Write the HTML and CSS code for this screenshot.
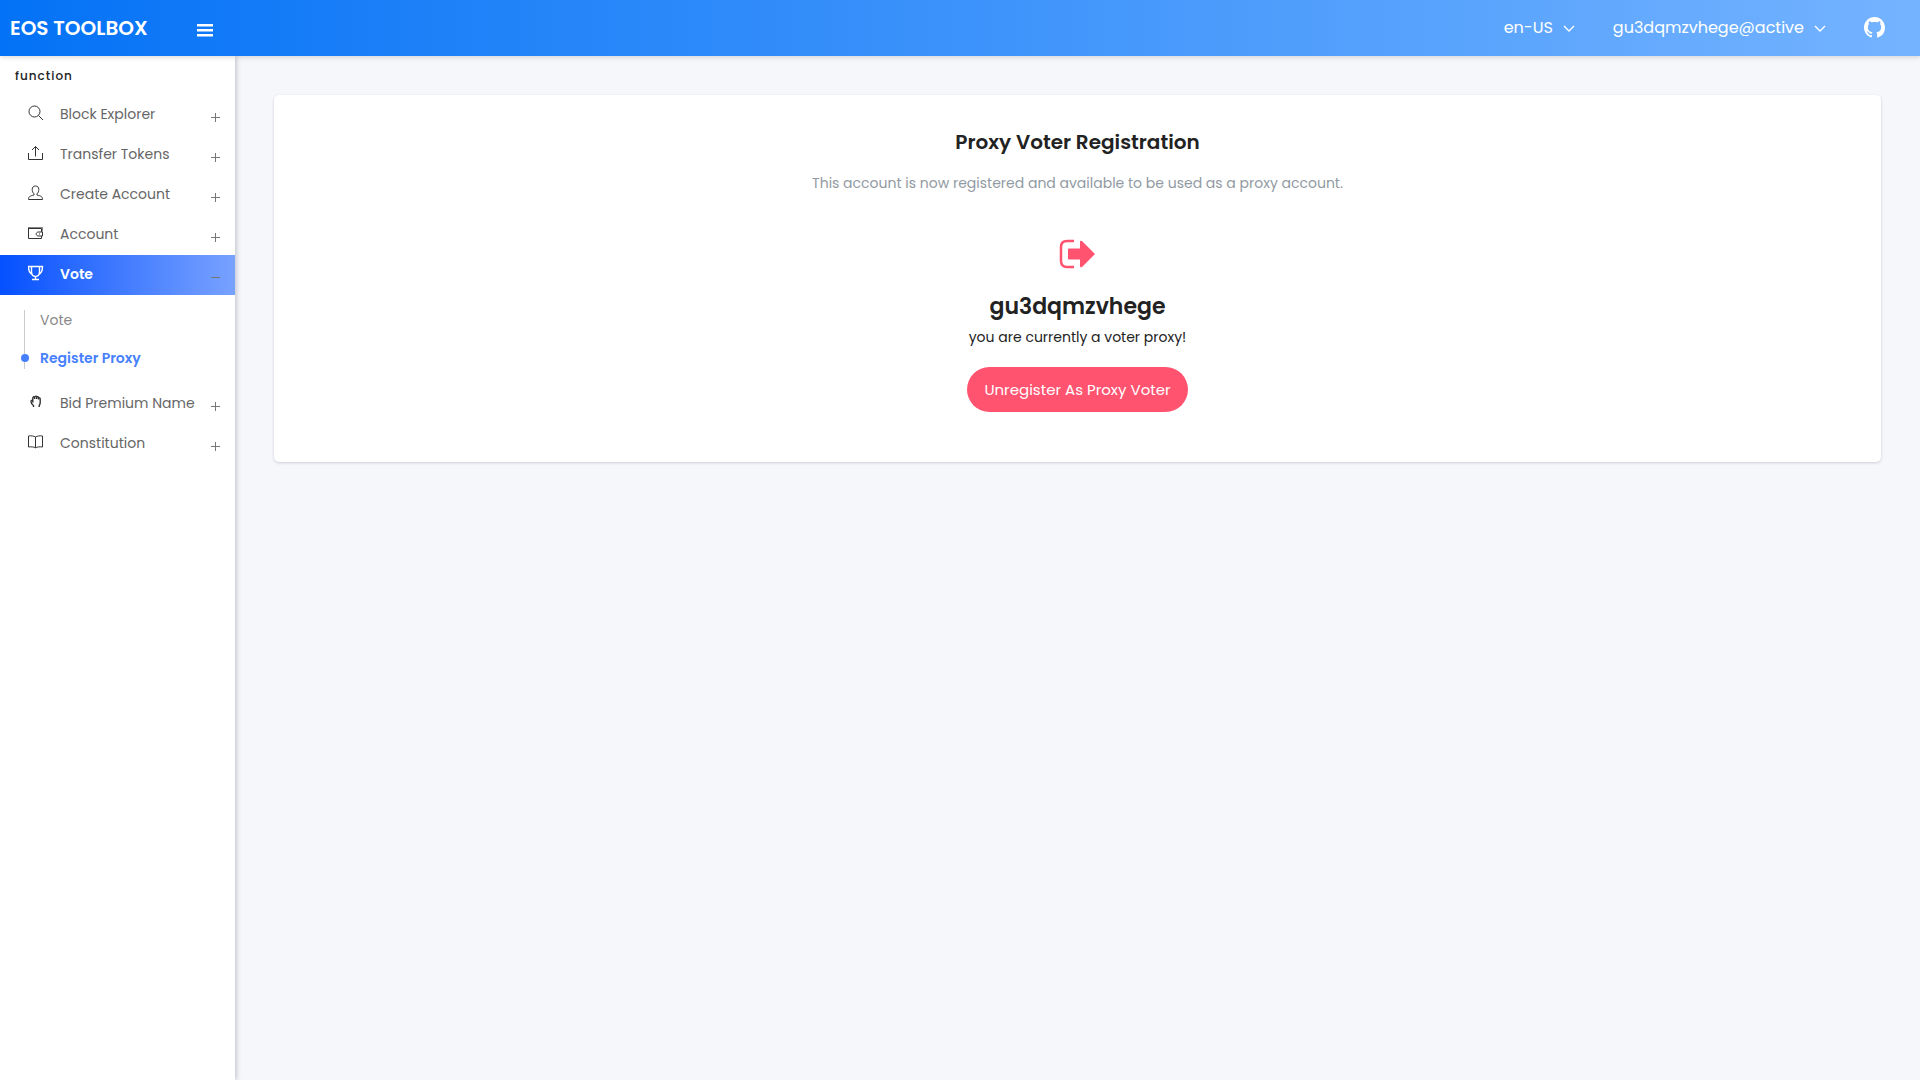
FILE: index.html
```html
<!DOCTYPE html>
<html lang="en">
<head>
<meta charset="utf-8">
<meta name="viewport" content="width=device-width, initial-scale=1">
<title>EOS Toolbox</title>
<link rel="stylesheet" href="styles.css">
</head>
<body>
<header class="topbar">
  <div class="topbar-start">
    <a class="brand" href="#">EOS TOOLBOX</a>
    <button class="menu-toggle" type="button" aria-label="Toggle menu">
      <svg width="16" height="14" viewBox="0 0 16 14" fill="currentColor"><path d="M0 1h16v2.500H0zM0 6h16v2.500H0zM0 11h16v2.500H0z"/></svg>
    </button>
  </div>
  <nav class="topbar-end" aria-label="Account">
    <button class="dropdown" type="button">en-US
      <svg width="12" height="12" viewBox="0 0 12 12"><path class="line bold" d="M1 4l5 5 5-5"/></svg>
    </button>
    <button class="dropdown" type="button">gu3dqmzvhege@active
      <svg width="12" height="12" viewBox="0 0 12 12"><path class="line bold" d="M1 4l5 5 5-5"/></svg>
    </button>
    <a class="github" href="#" aria-label="GitHub">
      <svg width="21" height="21" viewBox="0 0 16 16" fill="currentColor"><path d="M8 0C3.58 0 0 3.58 0 8c0 3.54 2.29 6.53 5.47 7.59.4.07.55-.17.55-.38 0-.19-.01-.82-.01-1.49-2.01.37-2.53-.49-2.69-.94-.09-.23-.48-.94-.82-1.13-.28-.15-.68-.52-.01-.53.63-.01 1.08.58 1.23.82.72 1.21 1.87.87 2.33.66.07-.52.28-.87.51-1.07-1.78-.2-3.64-.89-3.64-3.95 0-.87.31-1.59.82-2.15-.08-.2-.36-1.02.08-2.12 0 0 .67-.21 2.2.82.64-.18 1.32-.27 2-.27s1.36.09 2 .27c1.53-1.04 2.2-.82 2.2-.82.44 1.1.16 1.92.08 2.12.51.56.82 1.27.82 2.15 0 3.07-1.87 3.75-3.65 3.95.29.25.54.73.54 1.48 0 1.07-.01 1.93-.01 2.2 0 .21.15.46.55.38A8.01 8.01 0 0 0 16 8c0-4.42-3.58-8-8-8z"/></svg>
    </a>
  </nav>
</header>
<div class="layout">
  <aside class="sidebar">
    <h2 class="section-label">function</h2>
    <ul class="menu">
      <li><a class="item" href="#">
        <svg class="icon" viewBox="0 0 16 16"><circle class="line" cx="6.5" cy="6.5" r="5.5"/><path class="line" d="M10.5 10.500l4.500 4.500"/></svg>
        <span class="label">Block Explorer</span>
        <svg class="mark" viewBox="0 0 9 9"><path d="M4.500 0v9M0 4.500h9"/></svg></a></li>
      <li><a class="item" href="#">
        <svg class="icon" viewBox="0 0 16 16"><path class="line" d="M.5 8v6.500h14V8M7.500 11.500V1.500M4 5l3.500-3.500L11 5"/></svg>
        <span class="label">Transfer Tokens</span>
        <svg class="mark" viewBox="0 0 9 9"><path d="M4.500 0v9M0 4.500h9"/></svg></a></li>
      <li><a class="item" href="#">
        <svg class="icon" viewBox="0 0 16 16"><path class="line" d="M.5 14.500c0-3 1.500-3.500 5.500-4.500V8.800C4.700 7.800 4.200 6 4.200 4.500 4.200 2.200 5.500 1 7.500 1s3.300 1.200 3.300 3.500c0 1.500-.5 3.300-1.800 4.300V10c4 1 5.500 1.500 5.500 4.500z"/></svg>
        <span class="label">Create Account</span>
        <svg class="mark" viewBox="0 0 9 9"><path d="M4.500 0v9M0 4.500h9"/></svg></a></li>
      <li><a class="item" href="#">
        <svg class="icon" viewBox="0 0 16 16"><path class="line" d="M13.500 7V3.500M13.500 11v2.500H.5v-11M14.500 7v4h-4.500c-1.200-.4-1.800-1.100-1.800-2s.6-1.600 1.800-2zM11 9h1"/><path class="line" opacity=".6" d="M.5 2.500h14v4"/><path class="line" d="M.5 3.500h13"/></svg>
        <span class="label">Account</span>
        <svg class="mark" viewBox="0 0 9 9"><path d="M4.500 0v9M0 4.500h9"/></svg></a></li>
      <li>
        <a class="item active" href="#" aria-expanded="true">
        <svg class="icon" viewBox="0 0 16 16"><path class="line bold" d="M3.500 1.500h8v5c0 3-1.500 5-4 5s-4-2-4-5zM3.500 1.500h-3c0 4 1 7 4 8M11.500 1.500h3c0 4-1 7-4 8M7.500 11.500v3M4 14.500h7"/></svg>
        <span class="label">Vote</span>
        <svg class="mark" viewBox="0 0 9 9"><path d="M0 4.500h9"/></svg></a>
        <ul class="submenu">
          <li><a class="subitem" href="#">Vote</a></li>
          <li><a class="subitem current" href="#" aria-current="page">Register Proxy</a></li>
        </ul>
      </li>
      <li><a class="item" href="#">
        <svg class="icon" viewBox="0 0 16 16"><path class="line bold" d="M5.500 13v-1.500C4 10.500 3 9 3 7.500c0-1.200 1-1.500 1.800-.5V4c0-1.300 1.200-1.600 1.700-.8C7 1.800 8.500 1.800 8.800 3c.6-.8 1.700-.3 1.700.8.8-.5 1.700 0 1.700 1v4c0 1.200-.5 1.900-1 2.700V13M4.800 6v2.500M6.600 3v2M8.600 3v2M10.500 3.500v2"/></svg>
        <span class="label">Bid Premium Name</span>
        <svg class="mark" viewBox="0 0 9 9"><path d="M4.500 0v9M0 4.500h9"/></svg></a></li>
      <li><a class="item" href="#">
        <svg class="icon" viewBox="0 0 16 16"><path class="line" d="M7.500 3C6 2 3 1.500.500 2v11c2.500-.3 5.500-.2 7 .8 1.500-1 4.500-1.100 7-.8V2C12 1.500 9 2 7.500 3zv10.800"/></svg>
        <span class="label">Constitution</span>
        <svg class="mark" viewBox="0 0 9 9"><path d="M4.500 0v9M0 4.500h9"/></svg></a></li>
    </ul>
  </aside>
  <main class="content">
    <section class="card">
      <h1 class="card-title">Proxy Voter Registration</h1>
      <p class="card-subtitle">This account is now registered and available to be used as a proxy account.</p>
      <svg class="status-icon" width="38" height="30" viewBox="0 0 38 30"><path d="M15 2H8Q2 2 2 8v14q0 6 6 6h7" fill="none" stroke="currentColor" stroke-width="2.500"/><path fill="currentColor" d="M10 9.500h11V3q0-2 2-1l13 13-13 13q-2 1-2-1v-6.500H10q-1 0-1-1v-9q0-1 1-1z"/></svg>
      <h2 class="account">gu3dqmzvhege</h2>
      <p class="status">you are currently a voter proxy!</p>
      <button class="unregister" type="button">Unregister As Proxy Voter</button>
    </section>
  </main>
</div>
</body>
</html>
```
FILE: styles.css
```css
* { box-sizing: border-box; }
body {
  margin: 0;
  min-height: 100vh;
  display: flex;
  flex-direction: column;
  background: #f6f7fb;
  color: #222;
  font-family: Poppins, Inter, "Open Sans", sans-serif;
  font-size: 14px;
  line-height: 20px;
}
h1, h2, p, ul { margin: 0; padding: 0; }
ul { list-style: none; }
a { color: inherit; text-decoration: none; }
button { font: inherit; color: inherit; border: 0; background: none; padding: 0; cursor: pointer; }
svg { display: block; flex: none; }
.line { fill: none; stroke: currentColor; }
.bold { stroke-width: 1.4; }

.topbar {
  position: relative;
  z-index: 2;
  height: 56px;
  display: flex;
  align-items: center;
  justify-content: space-between;
  color: #fff;
  background: linear-gradient(to right, #0472f6, #74b3ff);
  box-shadow: 0 1px 5px rgba(43, 43, 43, .2);
}
.topbar-start {
  width: 235px;
  padding: 0 22px 0 10px;
  display: flex;
  align-items: center;
  justify-content: space-between;
}
.brand { font-size: 20px; font-weight: 600; }
.menu-toggle { padding-top: 4px; }
.topbar-end { display: flex; align-items: center; gap: 38px; padding-right: 35px; }
.dropdown { display: flex; align-items: center; gap: 10px; font-size: 16px; }
.github { padding-bottom: 2px; }

.layout { flex: 1; display: flex; }
.sidebar {
  width: 235px;
  flex: none;
  background: #fff;
  box-shadow: 1px 0 5px rgba(43, 54, 80, .3);
}
.section-label {
  padding: 10px 15px 9px;
  font-size: 12px;
  font-weight: 500;
  letter-spacing: 1px;
}
.item {
  height: 40px;
  display: flex;
  align-items: center;
  padding: 0 15px 2px 28px;
  color: #666;
}
.icon { width: 16px; height: 16px; margin: 0 16px 2px 0; color: #333; }
.label { flex: 1; }
.mark { width: 9px; height: 9px; margin-top: 7px; fill: none; stroke: #777; }
.active {
  color: #fff;
  font-weight: 600;
  background: linear-gradient(to right, #0550ff, #78a2ff);
}
.active .icon { color: #fff; }
.submenu { position: relative; padding: 6px 0 7px; }
.submenu::before {
  content: "";
  position: absolute;
  left: 24px;
  top: 15px;
  bottom: 15px;
  width: 1px;
  background: #ccc;
}
.subitem {
  position: relative;
  display: flex;
  align-items: center;
  height: 38px;
  padding-left: 40px;
  color: #888;
}
.current { color: #4680ff; font-weight: 600; }
.current::before {
  content: "";
  position: absolute;
  left: 21px;
  width: 8px;
  height: 8px;
  border-radius: 50%;
  background: currentColor;
}

.content { flex: 1; padding: 39px; }
.card {
  display: flex;
  flex-direction: column;
  align-items: center;
  padding: 32px 20px 50px;
  background: #fff;
  border-radius: 5px;
  box-shadow: 0 1px 3px rgba(43, 43, 80, .2);
  text-align: center;
}
.card-title { font-size: 20px; line-height: 30px; font-weight: 600; }
.card-subtitle { margin-top: 16px; color: #919aa3; }
.status-icon { margin-top: 46px; color: #ff5370; }
.account { margin-top: 22px; font-size: 22px; line-height: 32px; font-weight: 600; }
.status { margin-top: 4px; }
.unregister {
  height: 45px;
  margin-top: 20px;
  padding: 0 17px;
  border-radius: 23px;
  background: #ff5370;
  color: #fff;
  font-size: 15px;
}
```
